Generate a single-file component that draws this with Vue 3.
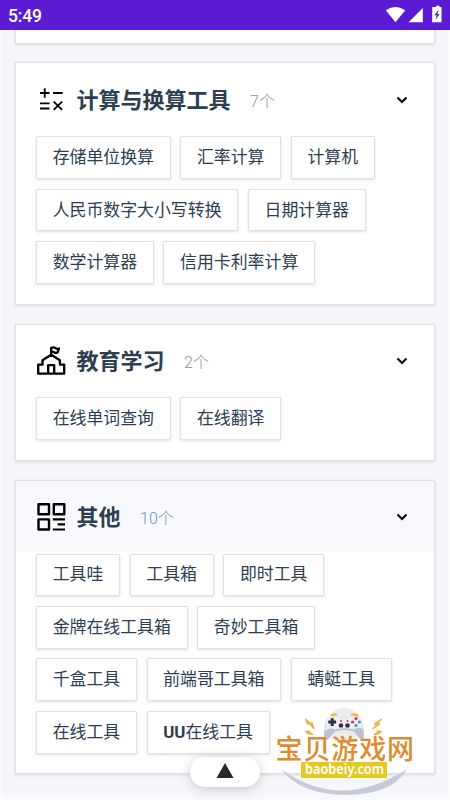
<script setup>
const groups = [
  {
    icon: 'calc', title: '计算与换算工具', count: '7个',
    rows: [['存储单位换算', '汇率计算', '计算机'], ['人民币数字大小写转换', '日期计算器'], ['数学计算器', '信用卡利率计算']],
  },
  { icon: 'school', title: '教育学习', count: '2个', rows: [['在线单词查询', '在线翻译']] },
  {
    icon: 'grid', title: '其他', count: '10个', active: true,
    rows: [['工具哇', '工具箱', '即时工具'], ['金牌在线工具箱', '奇妙工具箱'], ['千盒工具', '前端哥工具箱', '蜻蜓工具'], ['在线工具', 'UU在线工具']],
  },
]
</script>

<template>
  <div class="screen">
    <header class="status">
      <span class="time">5:49</span>
      <svg class="status-icons" width="60" height="20" viewBox="0 0 60 20">
        <path d="M.8 5.2Q10.500-1.400 20.200 5.200L10.500 17.200Z" fill="#fff" />
        <path d="M37.800 3V17.200H23.600Z" fill="#fff" />
        <path d="M49.500 2H51V.7H54.500V2H56.500V17.300H47.200V2Z" fill="#fff" />
        <path d="M53.800 4.600L49.300 10.300H51.700L50.500 14.900L54.600 9H52.300Z" fill="#5a1bd3" />
      </svg>
    </header>
    <main class="content">
      <section class="card previous"></section>
      <section v-for="group in groups" :key="group.title" class="card">
        <div class="card-head" :class="{ active: group.active }">
          <svg v-if="group.icon === 'calc'" class="icon" viewBox="0 0 30 30">
            <path d="M4 8H13.500M8.750 3.200V12.700M17 8H26.700M4 18.300H13.500M4 23.500H13.500M17.700 16.700L26.100 24.900M26.100 16.700L17.700 24.900" stroke="#000" stroke-width="1.800" fill="none" />
          </svg>
          <svg v-else-if="group.icon === 'school'" class="icon" viewBox="0 0 30 30">
            <path d="M2.200 27.700V18.700H6.500V14.300L15.200 8.700L23.900 14.300V18.700H28.200V27.700ZM12.200 27.700V19.200H18.200V27.700M15.200 8.700V1.800Q17.700 .8 19.300 2.100T23 2.500L21.500 6.500Q19.500 7.400 18.400 6.400T15.200 6.200" stroke="#000" stroke-width="2.300" stroke-linejoin="round" fill="none" />
          </svg>
          <svg v-else class="icon" viewBox="0 0 30 30">
            <path d="M2.500 2.300H13V12.300H2.500ZM17.800 2.300H28.300V12.300H17.800ZM2.500 17.400H13V27.500H2.500Z" stroke="#000" stroke-width="2.400" stroke-linejoin="round" fill="none" />
            <path d="M16.800 17.300H29M21.600 22.300H29M16.800 27.500H29" stroke="#000" stroke-width="2.200" fill="none" />
          </svg>
          <h2>{{ group.title }}</h2>
          <span class="count">{{ group.count }}</span>
          <svg class="chevron" width="12" height="10" viewBox="0 0 12 10">
            <path d="M1.500 2.500L6 7L10.500 2.500" stroke="#000" stroke-width="2.100" fill="none" />
          </svg>
        </div>
        <div class="tools">
          <div v-for="(row, i) in group.rows" :key="i" class="row">
            <button v-for="tool in row" :key="tool">
              <template v-if="tool.startsWith('UU')"><b>UU</b>{{ tool.slice(2) }}</template>
              <template v-else>{{ tool }}</template>
            </button>
          </div>
        </div>
      </section>
    </main>
    <div class="to-top">
      <svg width="18" height="16" viewBox="0 0 18 16"><path d="M9 0L17.500 15H.5Z" fill="#292929" /></svg>
    </div>
    <svg class="watermark" width="190" height="110" viewBox="0 0 190 110">
      <circle cx="84" cy="36" r="18" fill="#ececec" />
      <path d="M71 25.500L74 24.500H77M91 24.500H95L98 25.500" stroke="#eab52d" stroke-width="2" fill="none" />
      <path d="M67 28.500C72 25 77 26 80 27.500H88C91 26 96 25 101 28.500C103 36 105 45 103.500 49C100 51 97 45 94 41.500Q84 38.500 75 41.500C71 45 68 52 65 49C63 45 65 34 67 28.500Z" fill="#bfc1d0" />
      <path d="M67 28.500C72 25 77 26 80 27.500H88C91 26 96 25 101 28.500L103 39Q98 36.500 94 39.500Q84 36.500 75 39.500Q70 37 65 41Z" fill="#efeef4" />
      <path d="M72.200 28.200V36M68.300 32.100H76.100" stroke="#263347" stroke-width="3" />
      <circle cx="81" cy="35.500" r="2.300" fill="#29384a" /><circle cx="87.500" cy="35.500" r="2.300" fill="#29384a" />
      <g fill="#e32d54"><circle cx="96" cy="28.600" r="1.600" /><circle cx="92.600" cy="32" r="1.600" /><circle cx="81" cy="31" r="1" /><circle cx="87.500" cy="31" r="1" /></g>
      <g fill="#35a5b0"><circle cx="99.400" cy="32" r="1.600" /><circle cx="96" cy="35.400" r="1.600" /></g>
      <g fill="#f0c52d" stroke="#e5a52e" stroke-width=".9">
        <path d="M45.500 29L47.500 34.500L49 33.500L54 39.200L52 32.300L50.500 33.200Z" />
        <path d="M121.500 29L114 33.800L116.500 34.500L112.500 39.200L120 34L117.800 33.200Z" />
        <path d="M45 41.500L50 41L49.500 42.200L53 44.500L47.500 43.800L48 42.700Z" /><path d="M122 41.500L117 41L117.500 42.200L114 44.500L119.500 43.800L119 42.700Z" />
      </g>
      <path d="M21 79Q80 122 147 79Q133 104.500 86 105Q40 104.500 21 79Z" fill="#c9cad8" />
      <text class="brand" x="15.500" y="68.500" textLength="138.500" lengthAdjust="spacing">宝贝游戏网</text>
      <rect x="41" y="72" width="86" height="16" fill="#e3c922" />
      <text class="domain" x="45" y="83.800" textLength="79" lengthAdjust="spacingAndGlyphs">baobeiy.com</text>
    </svg>
  </div>
</template>

<style>
body { margin: 0; overflow: hidden; }
</style>

<style scoped>
* { box-sizing: border-box; }
.screen { position: relative; height: 800px; width: 450px; overflow: hidden; background: #f5f7fb; box-shadow: inset 2px 0 #fafbfd, inset -2px 0 #fafbfd, inset 0 -2px #fafbfd; font-family: Roboto, "Noto Sans CJK SC", sans-serif; color: #2c3e50; }
.status { display: flex; align-items: center; justify-content: space-between; height: 30px; padding: 1px 0 0 8px; background: #5a1bd3; color: #fff; }
.time { font-size: 17.500px; font-weight: 500; line-height: 30px; letter-spacing: -.2px; }
.status-icons { margin-right: 5px; margin-top: -1px; }
.content { padding: 0 15px; }
.card { margin-bottom: 18.800px; padding-bottom: 19.900px; background: #fff; border: 1px solid #dfe2e4; box-shadow: 0 1px 3px rgba(0, 0, 0, .12); }
.previous { height: 13.700px; padding: 0; border-top: 0; }
.card-head { display: flex; align-items: center; height: 71.300px; padding: 1px 26px 0 20px; }
.card-head.active { background: #f8f9fd; }
.icon { width: 30px; height: 30px; flex: none; }
h2 { margin: 2px 0 0 10.500px; font-size: 22px; line-height: 32px; font-weight: 700; }
.count { margin-left: 19.500px; font-size: 16px; font-weight: 300; color: #84959a; }
.active .count { color: #6f8bcb; }
.chevron { margin-left: auto; }
.tools { display: flex; flex-direction: column; gap: 9.850px; padding: 1.600px 20px 0; }
.row { display: flex; gap: 9.700px; height: 42.600px; }
button { height: 42.600px; padding: 0 15.650px 1px; border: 1px solid #dfe1e3; border-radius: 1px; background: #fff; box-shadow: 0 1px 3px rgba(0, 0, 0, .13); color: #2c3e50; font: 400 16.900px/26px Roboto, "Noto Sans CJK SC", sans-serif; white-space: nowrap; }
b { font-weight: 700; }
.to-top { position: absolute; left: 190px; top: 757px; width: 70px; height: 30px; display: flex; align-items: center; justify-content: center; padding-bottom: 2px; border-radius: 15px; background: #fff; box-shadow: 0 2px 12px rgba(0, 0, 0, .2); }
.watermark { position: absolute; left: 260px; top: 690px; }
.brand { font: 500 27px "Noto Sans CJK SC", sans-serif; fill: #df8b2d; }
.domain { font: 600 14.500px "Noto Sans", sans-serif; fill: #fff; }
</style>
